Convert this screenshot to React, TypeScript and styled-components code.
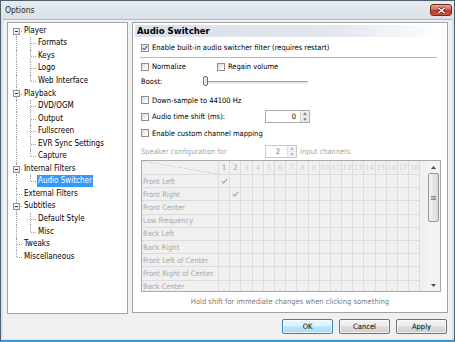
import React from 'react';
import styled, { createGlobalStyle } from 'styled-components';

const GlobalStyle = createGlobalStyle`
  html, body { margin: 0; padding: 0; background: #ffffff; }
  body {
    font-family: "DejaVu Sans Condensed", "DejaVu Sans", sans-serif;
    font-stretch: condensed;
    font-size: 7.5px;
    color: #000;
  }
  * { box-sizing: border-box; }
`;

const Window = styled.div`
  width: 455px;
  height: 342px;
  display: flex;
  flex-direction: column;
  background: #dbe1e8;
  border: 1px solid #4f5e6d;
  border-bottom: 2px solid #3a9ad4;
  overflow: hidden;
`;

const TitleBar = styled.div`
  height: 18px;
  flex: 0 0 18px;
  display: flex;
  align-items: flex-start;
  justify-content: space-between;
  padding-left: 4px;
  background: linear-gradient(#e7ebf0, #dbe1e8);
`;

const TitleText = styled.span`
  font-size: 8.5px;
  line-height: 18px;
  color: #1b1b1b;
`;

const CloseButton = styled.div`
  width: 22px;
  height: 12px;
  margin: 3px 2px 0 0;
  border: 1px solid #6e2b22;
  border-radius: 3px;
  background: linear-gradient(#e5a79d, #d0685a 45%, #b83e2e 55%, #c9543f);
  display: flex;
  align-items: center;
  justify-content: center;
`;

const Client = styled.div`
  flex: 1;
  margin: 0 2px 1px 2px;
  border-top: 1px solid #b3bcc6;
  background: #f0f0f0;
  padding: 2px 4px 0 4px;
  display: flex;
  flex-direction: column;
`;

const Body = styled.div`
  display: flex;
  gap: 4px;
  height: 292px;
`;

/* ---------- tree ---------- */

const Tree = styled.div`
  width: 121px;
  height: 292px;
  background: #ffffff;
  border: 1px solid #a3a3a3;
  padding-top: 1.5px;
  display: flex;
  flex-direction: column;
  font-size: 8px;
`;

const TreeRow = styled.div`
  height: 12.56px;
  display: flex;
  align-items: stretch;
`;

const Guide = styled.span<{ $up: boolean; $down: boolean; $branch: boolean }>`
  position: relative;
  flex: 0 0 14px;
  &::before {
    content: '';
    position: absolute;
    left: 8px;
    top: ${p => (p.$up ? '0' : '50%')};
    bottom: ${p => (p.$down ? '0' : '50%')};
    border-left: 1px dotted #a0a0a0;
    display: ${p => (p.$up || p.$down ? 'block' : 'none')};
  }
  &::after {
    content: '';
    position: absolute;
    left: 9px;
    right: 0;
    top: 50%;
    border-top: 1px dotted #a0a0a0;
    display: ${p => (p.$branch ? 'block' : 'none')};
  }
`;

const Expander = styled.span`
  position: absolute;
  left: 5px;
  top: 3px;
  width: 7px;
  height: 7px;
  border: 1px solid #929292;
  background: linear-gradient(135deg, #ffffff, #e2e2e2);
  z-index: 1;
  &::after {
    content: '';
    position: absolute;
    left: 1px;
    right: 1px;
    top: 2px;
    height: 1px;
    background: #333;
  }
`;

const TreeLabel = styled.span<{ $selected: boolean }>`
  margin-left: 1px;
  padding: 0 1px;
  line-height: 12px;
  height: 12px;
  align-self: center;
  white-space: nowrap;
  background: ${p => (p.$selected ? '#3399ff' : 'transparent')};
  color: ${p => (p.$selected ? '#ffffff' : '#000000')};
`;

/* ---------- right panel ---------- */

const Panel = styled.div`
  width: 316px;
  height: 291px;
  background: #ffffff;
  border: 1px solid #a3a3a3;
  display: flex;
  flex-direction: column;
`;

const PanelHeader = styled.div`
  margin: 2px 2px 0 2px;
  height: 12px;
  padding-left: 2px;
  font-size: 9.5px;
  font-weight: bold;
  line-height: 12px;
  background: linear-gradient(to right, #d9e0e9 0%, #e2e7ee 65%, #ffffff 100%);
`;

const Content = styled.div`
  padding-left: 8px;
  display: flex;
  flex-direction: column;
`;

const Row = styled.div<{ $mt: number }>`
  display: flex;
  align-items: center;
  height: 13px;
  margin-top: ${p => p.$mt}px;
  white-space: nowrap;
`;

const Separator = styled.div`
  margin: 3px 0 0 -1px;
  width: 297px;
  height: 1px;
  background: #b8b8b8;
`;

const Option = styled.label<{ $w?: number }>`
  display: flex;
  align-items: center;
  width: ${p => (p.$w ? `${p.$w}px` : 'auto')};
  flex: 0 0 auto;
`;

const Box = styled.span`
  width: 8px;
  height: 8px;
  margin-right: 3px;
  border: 1px solid #8f8f8f;
  background: linear-gradient(135deg, #d9d9d9, #f7f7f7 70%, #ffffff);
  display: flex;
  align-items: center;
  justify-content: center;
`;

const Muted = styled.span`
  color: #a6a6a6;
`;

const Label = styled.span<{ $w: number }>`
  width: ${p => p.$w}px;
  flex: 0 0 auto;
`;

const SliderTrack = styled.div`
  position: relative;
  width: 105px;
  height: 13px;
  &::before {
    content: '';
    position: absolute;
    left: 1px;
    right: 0;
    top: 6px;
    height: 2px;
    border-top: 1px solid #a0a0a0;
    border-bottom: 1px solid #ffffff;
    background: #e7eaea;
  }
`;

const SliderThumb = styled.span`
  position: absolute;
  left: 0;
  top: 1px;
  width: 5px;
  height: 10px;
  border: 1px solid #707070;
  border-radius: 2px;
  background: linear-gradient(to right, #f2f2f2, #d8d8d8);
`;

const Spin = styled.div<{ $w: number; $disabled?: boolean }>`
  width: ${p => p.$w}px;
  height: 13px;
  border: 1px solid ${p => (p.$disabled ? '#c9c9c9' : '#abadb3')};
  display: flex;
  background: #ffffff;
`;

const SpinValue = styled.span<{ $disabled?: boolean; $pad: number }>`
  flex: 1;
  text-align: right;
  padding-right: ${p => p.$pad}px;
  line-height: 11px;
  color: ${p => (p.$disabled ? '#6d6d6d' : '#000')};
`;

const SpinButtons = styled.div<{ $disabled?: boolean }>`
  width: 9px;
  display: flex;
  flex-direction: column;
  border-left: 1px solid ${p => (p.$disabled ? '#e2e2e2' : '#d6d6d6')};
`;

const SpinHalf = styled.span<{ $disabled?: boolean }>`
  flex: 1;
  display: flex;
  align-items: center;
  justify-content: center;
  background: ${p => (p.$disabled ? '#f4f4f4' : 'linear-gradient(#f6f6f6, #e3e6ea)')};
  & + & { border-top: 1px solid #e6e6e6; }
`;

/* ---------- channel grid ---------- */

const Table = styled.div`
  margin-top: 2px;
  width: 300px;
  height: 132px;
  border: 1px solid #a9a9a9;
  background: #f0f0f0;
  display: flex;
  overflow: hidden;
`;

const Grid = styled.div`
  flex: 1;
  display: grid;
  grid-template-columns: 77px repeat(18, 11.2px);
  grid-template-rows: 14px;
  grid-auto-rows: 13.2px;
  align-content: start;
  overflow: hidden;
`;

const Cell = styled.div<{ $tone?: string; $corner?: boolean }>`
  border-right: 1px solid #dcdcdc;
  border-bottom: 1px solid #dcdcdc;
  color: ${p => p.$tone || '#a8a8a8'};
  display: flex;
  align-items: center;
  justify-content: center;
  white-space: nowrap;
  overflow: hidden;
  background: ${p =>
    p.$corner
      ? 'linear-gradient(to top right, transparent calc(50% - 0.6px), #d2d2d2, transparent calc(50% + 0.6px))'
      : 'transparent'};
`;

const RowHead = styled(Cell)`
  justify-content: flex-start;
  padding-left: 1px;
`;

const Scrollbar = styled.div`
  width: 13px;
  flex: 0 0 13px;
  background: #f3f3f3;
  display: flex;
  flex-direction: column;
  align-items: center;
`;

const ScrollArrow = styled.div`
  height: 12px;
  width: 100%;
  display: flex;
  align-items: center;
  justify-content: center;
`;

const ScrollGap = styled.div`
  flex: 1;
`;

const Thumb = styled.div`
  width: 11px;
  height: 49px;
  border: 1px solid #979797;
  border-radius: 2px;
  background: linear-gradient(to right, #f4f4f4, #e6e6e6 50%, #d9d9d9);
  display: flex;
  align-items: center;
  justify-content: center;
`;

const Hint = styled.div`
  margin: 4px 0 0 -8px;
  height: 12px;
  line-height: 12px;
  text-align: center;
  color: #7a7a7a;
`;

const Trailing = styled(Muted)`
  margin-left: 3px;
`;

/* ---------- footer ---------- */

const Footer = styled.div`
  margin-top: 5px;
  display: flex;
  justify-content: flex-end;
  gap: 6px;
  padding-right: 1px;
`;

const Button = styled.div<{ $default?: boolean }>`
  width: 51px;
  height: 15px;
  border: 1px solid ${p => (p.$default ? '#3c7fb1' : '#707070')};
  border-radius: 2px;
  background: ${p =>
    p.$default
      ? 'linear-gradient(#eaf6fd, #d9f0fc 50%, #bee6fd 50%, #a7d9f5)'
      : 'linear-gradient(#f2f2f2, #ebebeb 50%, #dddddd 50%, #cfcfcf)'};
  box-shadow: inset 0 0 0 1px rgba(255, 255, 255, 0.7);
  display: flex;
  align-items: center;
  justify-content: center;
  color: #000;
`;

/* ---------- data ---------- */

type Node = { label: string; children: string[] };

const tree: Node[] = [
  { label: 'Player', children: ['Formats', 'Keys', 'Logo', 'Web Interface'] },
  { label: 'Playback', children: ['DVD/OGM', 'Output', 'Fullscreen', 'EVR Sync Settings', 'Capture'] },
  { label: 'Internal Filters', children: ['Audio Switcher'] },
  { label: 'External Filters', children: [] },
  { label: 'Subtitles', children: ['Default Style', 'Misc'] },
  { label: 'Tweaks', children: [] },
  { label: 'Miscellaneous', children: [] },
];

const speakers = [
  'Front Left',
  'Front Right',
  'Front Center',
  'Low Frequency',
  'Back Left',
  'Back Right',
  'Front Left of Center',
  'Front Right of Center',
  'Back Center',
];

// default 2-channel mapping: input 1 -> front left, input 2 -> front right
const mapped = (row: number, col: number) => row < 2 && col === row + 1;

const Check = ({ color = '#4a5c9a' }: { color?: string }) => (
  <svg width="7" height="6" viewBox="0 0 7 6">
    <polyline points="0.8,3.2 2.6,5 6.2,0.8" fill="none" stroke={color} strokeWidth="1.3" />
  </svg>
);

const CheckBox = ({ checked }: { checked?: boolean }) => <Box>{checked && <Check />}</Box>;

const Arrow = ({ up, color = '#4d4d4d', w = 5 }: { up?: boolean; color?: string; w?: number }) => (
  <svg width={w} height="3" viewBox="0 0 5 3">
    <polygon points={up ? '0,3 5,3 2.5,0' : '0,0 5,0 2.5,3'} fill={color} />
  </svg>
);

const SpinBox = ({ value, width, pad, disabled }: { value: string; width: number; pad: number; disabled?: boolean }) => (
  <Spin $w={width} $disabled={disabled}>
    <SpinValue $disabled={disabled} $pad={pad}>{value}</SpinValue>
    <SpinButtons $disabled={disabled}>
      <SpinHalf $disabled={disabled}><Arrow up w={4} color={disabled ? '#b5b5b5' : '#6f7d8d'} /></SpinHalf>
      <SpinHalf $disabled={disabled}><Arrow w={4} color={disabled ? '#b5b5b5' : '#6f7d8d'} /></SpinHalf>
    </SpinButtons>
  </Spin>
);

const TreeView = () => {
  const rows: React.ReactNode[] = [];
  tree.forEach((node, i) => {
    const first = i === 0;
    const last = i === tree.length - 1;
    rows.push(
      <TreeRow key={node.label}>
        <Guide $up={!first} $down={!last} $branch>
          {node.children.length > 0 && <Expander />}
        </Guide>
        <TreeLabel $selected={false}>{node.label}</TreeLabel>
      </TreeRow>
    );
    node.children.forEach((child, j) => {
      rows.push(
        <TreeRow key={child}>
          <Guide $up $down={!last} $branch={false} />
          <Guide $up $down={j < node.children.length - 1} $branch />
          <TreeLabel $selected={child === 'Audio Switcher'}>{child}</TreeLabel>
        </TreeRow>
      );
    });
  });
  return <Tree>{rows}</Tree>;
};

const ChannelGrid = () => {
  const cols = Array.from({ length: 18 }, (_, i) => i + 1);
  return (
    <Table>
      <Grid>
        <Cell $corner />
        {cols.map(c => (
          <Cell key={c} $tone={c <= 2 ? '#a0a0a0' : '#d3d3d3'}>{c}</Cell>
        ))}
        {speakers.map((name, r) => (
          <React.Fragment key={name}>
            <RowHead>{name}</RowHead>
            {cols.map(c => (
              <Cell key={c}>{mapped(r, c) && <Check color="#ababab" />}</Cell>
            ))}
          </React.Fragment>
        ))}
      </Grid>
      <Scrollbar>
        <ScrollArrow><Arrow up /></ScrollArrow>
        <Thumb>
          <svg width="5" height="4" viewBox="0 0 5 4">
            <rect x="0" y="0" width="5" height="1" fill="#8a8a8a" />
            <rect x="0" y="1.5" width="5" height="1" fill="#8a8a8a" />
            <rect x="0" y="3" width="5" height="1" fill="#8a8a8a" />
          </svg>
        </Thumb>
        <ScrollGap />
        <ScrollArrow><Arrow /></ScrollArrow>
      </Scrollbar>
    </Table>
  );
};

export default function App() {
  return (
    <>
      <GlobalStyle />
      <Window>
        <TitleBar>
          <TitleText>Options</TitleText>
          <CloseButton>
            <svg width="9" height="7" viewBox="0 0 9 7">
              <path d="M1.5 1 L7.5 6 M7.5 1 L1.5 6" stroke="#5a1f18" strokeWidth="3" />
              <path d="M1.5 1 L7.5 6 M7.5 1 L1.5 6" stroke="#ffffff" strokeWidth="1.6" />
            </svg>
          </CloseButton>
        </TitleBar>
        <Client>
          <Body>
            <TreeView />
            <Panel>
              <PanelHeader>Audio Switcher</PanelHeader>
              <Content>
                <Row $mt={4}>
                  <Option><CheckBox checked />Enable built-in audio switcher filter (requires restart)</Option>
                </Row>
                <Separator />
                <Row $mt={2}>
                  <Option $w={76}><CheckBox />Normalize</Option>
                  <Option><CheckBox />Regain volume</Option>
                </Row>
                <Row $mt={1.5}>
                  <Label $w={62}>Boost:</Label>
                  <SliderTrack><SliderThumb /></SliderTrack>
                </Row>
                <Row $mt={6}>
                  <Option><CheckBox />Down-sample to 44100 Hz</Option>
                </Row>
                <Row $mt={3.5}>
                  <Option $w={124}><CheckBox />Audio time shift (ms):</Option>
                  <SpinBox value="0" width={45} pad={4} />
                </Row>
                <Row $mt={3.5}>
                  <Option><CheckBox />Enable custom channel mapping</Option>
                </Row>
                <Row $mt={5.5}>
                  <Label $w={124}><Muted>Speaker configuration for</Muted></Label>
                  <SpinBox value="2" width={32} pad={7} disabled />
                  <Trailing>input channels:</Trailing>
                </Row>
                <ChannelGrid />
                <Hint>Hold shift for immediate changes when clicking something</Hint>
              </Content>
            </Panel>
          </Body>
          <Footer>
            <Button $default>OK</Button>
            <Button>Cancel</Button>
            <Button>Apply</Button>
          </Footer>
        </Client>
      </Window>
    </>
  );
}
